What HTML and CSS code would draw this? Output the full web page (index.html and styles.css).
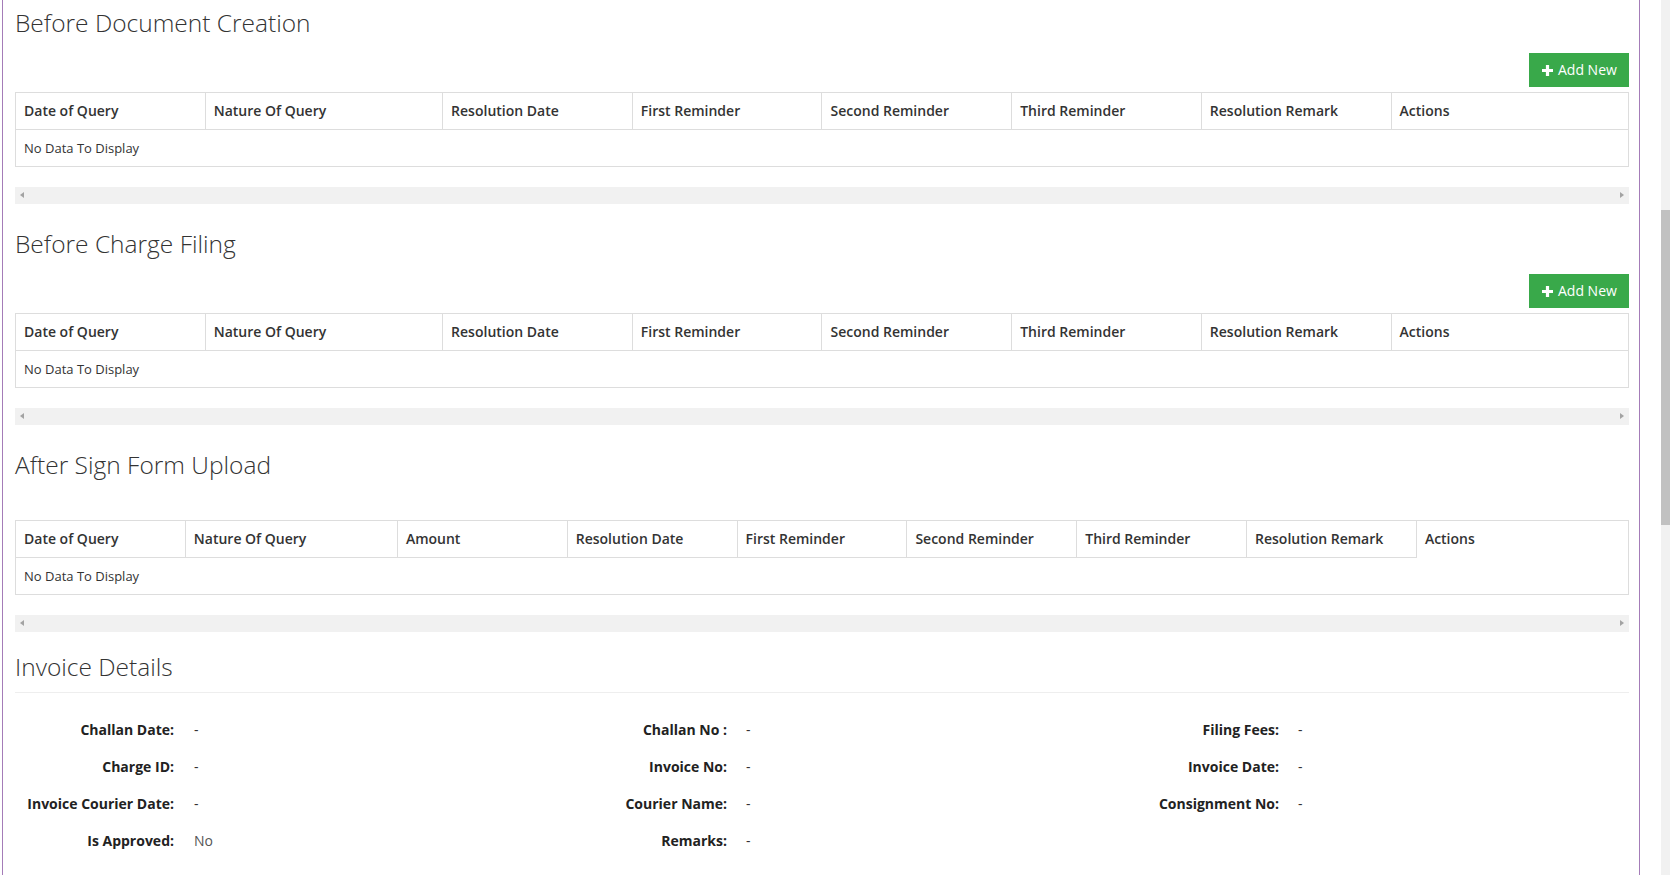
FILE: index.html
```html
<!DOCTYPE html>
<html lang="en">
<head>
<meta charset="utf-8">
<title>Queries</title>
<link rel="stylesheet" href="styles.css">
</head>
<body>
<div class="page">
  <main class="panel">

    <section class="block">
      <h3 class="block-title">Before Document Creation</h3>
      <div class="btn-row">
        <button class="btn-add" type="button"><svg class="plus" viewBox="0 0 11 11" width="11" height="11"><path d="M3.9 0h3.2v3.9H11v3.2H7.1V11H3.9V7.1H0V3.9h3.9z" fill="#fff"/></svg>Add New</button>
      </div>
      <table class="grid grid-8">
        <colgroup><col class="c-n"><col class="c-w"><col class="c-n"><col class="c-n"><col class="c-n"><col class="c-n"><col class="c-n"><col class="c-w"></colgroup>
        <thead><tr><th>Date of Query</th><th>Nature Of Query</th><th>Resolution Date</th><th>First Reminder</th><th>Second Reminder</th><th>Third Reminder</th><th>Resolution Remark</th><th>Actions</th></tr></thead>
        <tbody><tr><td colspan="8">No Data To Display</td></tr></tbody>
      </table>
      <div class="hscroll"><span class="arr arr-l"></span><span class="arr arr-r"></span></div>
    </section>

    <section class="block">
      <h3 class="block-title">Before Charge Filing</h3>
      <div class="btn-row">
        <button class="btn-add" type="button"><svg class="plus" viewBox="0 0 11 11" width="11" height="11"><path d="M3.9 0h3.2v3.9H11v3.2H7.1V11H3.9V7.1H0V3.9h3.9z" fill="#fff"/></svg>Add New</button>
      </div>
      <table class="grid grid-8">
        <colgroup><col class="c-n"><col class="c-w"><col class="c-n"><col class="c-n"><col class="c-n"><col class="c-n"><col class="c-n"><col class="c-w"></colgroup>
        <thead><tr><th>Date of Query</th><th>Nature Of Query</th><th>Resolution Date</th><th>First Reminder</th><th>Second Reminder</th><th>Third Reminder</th><th>Resolution Remark</th><th>Actions</th></tr></thead>
        <tbody><tr><td colspan="8">No Data To Display</td></tr></tbody>
      </table>
      <div class="hscroll"><span class="arr arr-l"></span><span class="arr arr-r"></span></div>
    </section>

    <section class="block">
      <h3 class="block-title">After Sign Form Upload</h3>
      <table class="grid grid-9 no-btn">
        <colgroup><col class="c-n9"><col class="c-w9"><col class="c-n9"><col class="c-n9"><col class="c-n9"><col class="c-n9"><col class="c-n9"><col class="c-n9"><col class="c-w9"></colgroup>
        <thead><tr><th>Date of Query</th><th>Nature Of Query</th><th>Amount</th><th>Resolution Date</th><th>First Reminder</th><th>Second Reminder</th><th>Third Reminder</th><th>Resolution Remark</th><th class="open-bottom">Actions</th></tr></thead>
        <tbody><tr><td colspan="9">No Data To Display</td></tr></tbody>
      </table>
      <div class="hscroll"><span class="arr arr-l"></span><span class="arr arr-r"></span></div>
    </section>

    <section class="block invoice">
      <h3 class="block-title">Invoice Details</h3>
      <hr class="rule">
      <div class="details">
        <dl class="dcol dcol-1">
          <dt>Challan Date:</dt><dd>-</dd>
          <dt>Charge ID:</dt><dd>-</dd>
          <dt>Invoice Courier Date:</dt><dd>-</dd>
          <dt>Is Approved:</dt><dd class="muted">No</dd>
        </dl>
        <dl class="dcol dcol-2">
          <dt>Challan No :</dt><dd>-</dd>
          <dt>Invoice No:</dt><dd>-</dd>
          <dt>Courier Name:</dt><dd>-</dd>
          <dt>Remarks:</dt><dd>-</dd>
        </dl>
        <dl class="dcol dcol-3">
          <dt>Filing Fees:</dt><dd>-</dd>
          <dt>Invoice Date:</dt><dd>-</dd>
          <dt>Consignment No:</dt><dd>-</dd>
        </dl>
      </div>
    </section>

  </main>
  <div class="vscroll"><div class="thumb"></div></div>
</div>
</body>
</html>
```

FILE: styles.css
```css
html, body {
  margin: 0;
  padding: 0;
  background: #fff;
  height: 100%;
  overflow: hidden;
}

body {
  font-family: "Open Sans", "Noto Sans", sans-serif;
  color: #333;
  font-size: 14px;
  line-height: 20px;
}

.page {
  display: flex;
  height: 100vh;
  padding-left: 2px;
}

.panel {
  width: 1614px;
  flex: none;
  border-left: 1px solid #a47cb8;
  border-right: 1px solid #a47cb8;
  padding: 10px 10px 0 12px;
  box-sizing: content-box;
  overflow: hidden;
}

.block + .block {
  margin-top: 27px;
}

.block.invoice {
  margin-top: 22px;
}

.block-title {
  margin: 0;
  font-family: "Open Sans", sans-serif;
  font-weight: 300;
  font-size: 24.5px;
  line-height: 26px;
  color: #333;
}

.btn-row {
  display: flex;
  justify-content: flex-end;
  margin-top: 17px;
  margin-bottom: 5px;
}

.btn-add {
  display: inline-flex;
  align-items: center;
  gap: 5px;
  height: 34px;
  width: 100px;
  padding: 0 0 0 13px;
  border: 0;
  border-radius: 0;
  background: #39a94a;
  color: #fff;
  font-family: "Open Sans", sans-serif;
  font-size: 14px;
  line-height: 20px;
}

.plus {
  display: block;
}

.grid {
  width: 100%;
  border-collapse: collapse;
  table-layout: fixed;
  border: 1px solid #ddd;
}

.grid.no-btn {
  margin-top: 42px;
}

.c-n { width: 11.76%; }
.c-w { width: 14.72%; }
.c-n9 { width: 10.53%; }
.c-w9 { width: 13.15%; }

.grid th {
  text-align: left;
  font-weight: 600;
  font-size: 14px;
  line-height: 20px;
  padding: 8px;
  border: 1px solid #ddd;
  color: #333;
  white-space: nowrap;
  overflow: hidden;
}

.grid th.open-bottom {
  border-bottom-color: transparent;
}

.grid td {
  font-size: 13px;
  line-height: 20px;
  padding: 8px;
  border: 1px solid #ddd;
  color: #333;
}

.hscroll {
  position: relative;
  margin-top: 20px;
  height: 17px;
  background: #f1f1f1;
}

.arr {
  position: absolute;
  top: 5px;
  width: 0;
  height: 0;
  border-top: 3.5px solid transparent;
  border-bottom: 3.5px solid transparent;
}

.arr-l {
  left: 5px;
  border-right: 4px solid #a3a3a3;
}

.arr-r {
  right: 5px;
  border-left: 4px solid #a3a3a3;
}

.rule {
  margin: 12px 0 0;
  border: 0;
  border-top: 1px solid #eee;
  height: 0;
}

.details {
  display: grid;
  grid-template-columns: 538px 538px 1fr;
  margin-top: 27px;
}

.dcol {
  display: grid;
  row-gap: 17px;
  column-gap: 20px;
  margin: 0;
  align-content: start;
}

.dcol-1 { grid-template-columns: 159px 1fr; }
.dcol-2 { grid-template-columns: 174px 1fr; column-gap: 19px; }
.dcol-3 { grid-template-columns: 188px 1fr; column-gap: 19px; }

.dcol dt {
  text-align: right;
  font-weight: 700;
  color: #222;
  white-space: nowrap;
}

.dcol dd {
  margin: 0;
  color: #333;
}

.dcol dd.muted {
  color: #555;
}

.vscroll {
  margin-left: 21px;
  width: 9px;
  flex: none;
  background: #f1f1f1;
  height: 100%;
}

.thumb {
  margin-top: 210px;
  height: 315px;
  background: #c1c1c1;
}
```
